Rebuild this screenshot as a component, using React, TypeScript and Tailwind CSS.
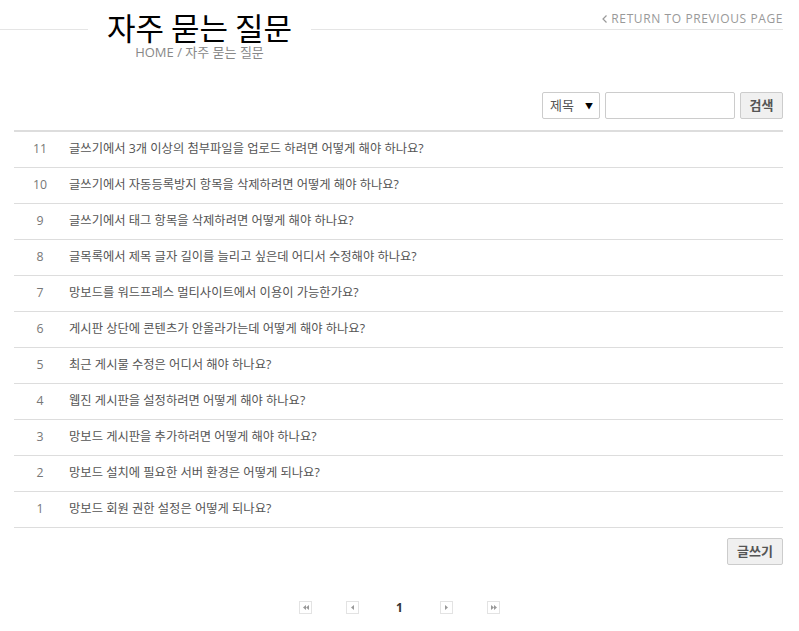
import React from "react";

const rows: [number, string][] = [
  [11, "글쓰기에서 3개 이상의 첨부파일을 업로드 하려면 어떻게 해야 하나요?"],
  [10, "글쓰기에서 자동등록방지 항목을 삭제하려면 어떻게 해야 하나요?"],
  [9, "글쓰기에서 태그 항목을 삭제하려면 어떻게 해야 하나요?"],
  [8, "글목록에서 제목 글자 길이를 늘리고 싶은데 어디서 수정해야 하나요?"],
  [7, "망보드를 워드프레스 멀티사이트에서 이용이 가능한가요?"],
  [6, "게시판 상단에 콘텐츠가 안올라가는데 어떻게 해야 하나요?"],
  [5, "최근 게시물 수정은 어디서 해야 하나요?"],
  [4, "웹진 게시판을 설정하려면 어떻게 해야 하나요?"],
  [3, "망보드 게시판을 추가하려면 어떻게 해야 하나요?"],
  [2, "망보드 설치에 필요한 서버 환경은 어떻게 되나요?"],
  [1, "망보드 회원 권한 설정은 어떻게 되나요?"],
];

function PageBox({ children }: { children: React.ReactNode }) {
  return (
    <div className="w-[47px] flex justify-center">
      <div className="w-[13px] h-[13px] border border-[#e3e3e3] flex items-center justify-center">
        {children}
      </div>
    </div>
  );
}

const Tri = ({ dir }: { dir: "l" | "r" }) => (
  <svg width="3" height="5" viewBox="0 0 3 5">
    {dir === "l" ? <path d="M3 0 L0 2.5 L3 5 Z" fill="#999" /> : <path d="M0 0 L3 2.5 L0 5 Z" fill="#999" />}
  </svg>
);

export default function App() {
  return (
    <div
      className="w-[799px] h-[631px] bg-white text-[#555] overflow-hidden"
      style={{ fontFamily: '"Open Sans", "Noto Sans CJK KR", sans-serif' }}
    >
      {/* header */}
      <div className="flex items-start pr-[16px]">
        <div className="w-[88px] h-[30px] border-b border-[#e5e5e5]" />
        <div className="px-[19px] flex flex-col items-center">
          <div className="text-[31px] leading-[30px] mt-[12px] text-black" style={{ fontFamily: '"Noto Sans CJK KR", sans-serif' }}>
            자주 묻는 질문
          </div>
          <div className="text-[13px] leading-[16px] mt-[2px] text-[#888]">HOME / 자주 묻는 질문</div>
        </div>
        <div className="flex-1 h-[30px] border-b border-[#e5e5e5] flex justify-end">
          <a className="mt-[9px] text-[12px] leading-[14px] tracking-[0.6px] text-[#999] flex items-center gap-[4px]">
            <svg width="5" height="8" viewBox="0 0 5 8">
              <path d="M4.5 0.5 L1 4 L4.5 7.5" stroke="#999" strokeWidth="1.2" fill="none" />
            </svg>
            RETURN TO PREVIOUS PAGE
          </a>
        </div>
      </div>

      {/* search */}
      <div className="flex justify-end gap-[5px] pr-[16px] mt-[32px]">
        <div className="w-[58px] h-[27px] border border-[#ccc] rounded-[2px] flex items-center justify-between pl-[7px] pr-[6px] text-[13px]">
          <span>제목</span>
          <span className="text-[8px] text-black">▼</span>
        </div>
        <div className="w-[130px] h-[27px] border border-[#ccc] rounded-[2px]" />
        <div className="w-[43px] h-[27px] border border-[#ccc] rounded-[2px] bg-[#f0f0f0] flex items-center justify-center text-[13px] font-bold text-[#555]">
          검색
        </div>
      </div>

      {/* table */}
      <div className="ml-[14px] mr-[16px] mt-[11px] border-t-2 border-[#ddd]">
        {rows.map(([n, t]) => (
          <div key={n} className="flex items-center h-[36px] border-b border-[#ddd] text-[12.3px]">
            <div className="w-[52px] text-center text-[#777]">{n}</div>
            <div className="pl-[3px] text-[#555]">{t}</div>
          </div>
        ))}
      </div>

      <div className="flex justify-end pr-[16px] mt-[10px]">
        <div className="w-[56px] h-[27px] border border-[#ccc] rounded-[2px] bg-[#f0f0f0] flex items-center justify-center text-[13px] font-bold text-[#555]">
          글쓰기
        </div>
      </div>

      {/* pagination */}
      <div className="flex justify-center items-center mt-[36px]">
        <PageBox>
          <div className="flex"><Tri dir="l" /><Tri dir="l" /></div>
        </PageBox>
        <PageBox>
          <Tri dir="l" />
        </PageBox>
        <div className="w-[47px] text-center text-[12px] font-bold text-[#333] leading-[13px]">1</div>
        <PageBox>
          <Tri dir="r" />
        </PageBox>
        <PageBox>
          <div className="flex"><Tri dir="r" /><Tri dir="r" /></div>
        </PageBox>
      </div>
    </div>
  );
}
